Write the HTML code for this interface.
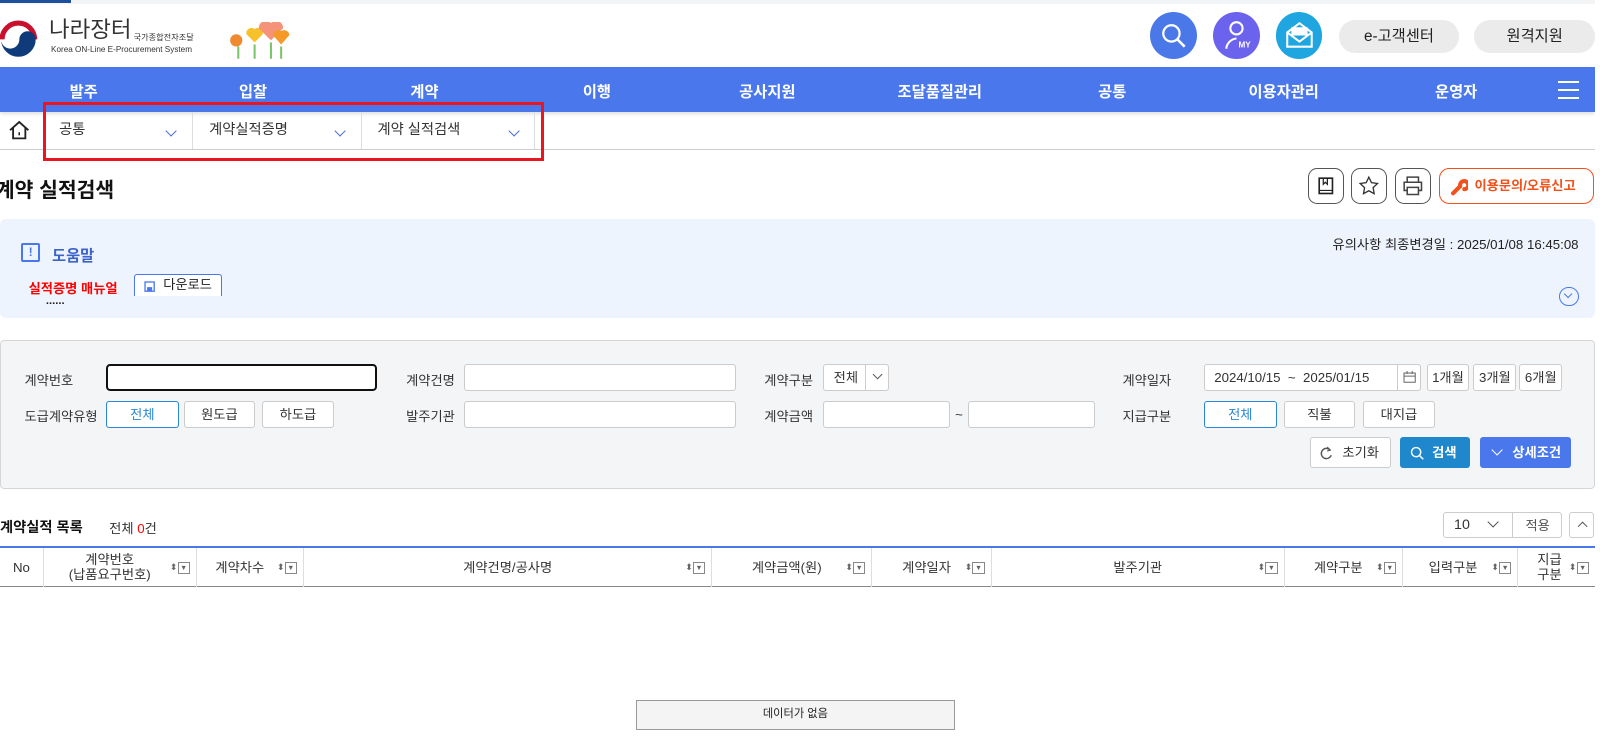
<!DOCTYPE html>
<html><head><meta charset="utf-8">
<style>
*{box-sizing:border-box;margin:0;padding:0}
body{width:1600px;height:739px;overflow:hidden;background:#fff;font-family:"Liberation Sans","Noto Sans CJK KR",sans-serif;color:#222}
#w{position:relative;width:1563px;height:724px;zoom:1.0204;overflow:hidden}
.a{position:absolute}
.nav span{position:absolute;top:12px;color:#fff;font-size:15px;font-weight:bold;transform:translateX(-50%)}
.circ{position:absolute;top:12px;width:46px;height:46px;border-radius:50%}
.pill{position:absolute;top:20px;height:32px;border-radius:16px;background:#ebebeb;font-size:15px;text-align:center;line-height:34px;color:#222}
.bc{position:absolute;top:110px;height:36px;font-size:14px;line-height:36px;color:#333;border-right:1px solid #ddd}
.chev{position:absolute;top:14px;width:8px;height:8px;border-right:1.5px solid #4a6fd8;border-bottom:1.5px solid #4a6fd8;transform:rotate(45deg)}
.ib{position:absolute;top:165px;width:35px;height:35px;border:1px solid #555;border-radius:9px}
.lbl{position:absolute;font-size:13px;color:#333}
.inp{position:absolute;height:26px;border:1px solid #ccc;border-radius:3px;background:#fff}
.btn{position:absolute;height:26px;border:1px solid #ccc;border-radius:3px;background:#fff;font-size:13px;text-align:center;line-height:25px;color:#333}
.sel{border-color:#2b88d8;color:#2b88d8}
.th{position:absolute;top:537px;height:38px;border-right:1px solid #ddd;font-size:13px;text-align:center;color:#333;display:flex;align-items:center;justify-content:center;line-height:15px}
.srt{position:absolute;right:6px;top:12px;font-size:9px;color:#666}
.srt b{display:inline-block;width:12px;height:12px;border:1px solid #888;vertical-align:middle;font-size:7px;line-height:10px;font-weight:normal}
</style></head><body><div id="w">
<div class="a" style="left:0;top:0;width:1563px;height:4px;background:#f3f4f6"></div>
<div class="a" style="left:0;top:0;width:70px;height:3px;background:#1d4f9c"></div>
<!-- logo -->
<svg class="a" style="left:0;top:18px" width="38" height="42" viewBox="0 0 38 42"><circle cx="18" cy="21" r="17" fill="#fff"/><path d="M2 21A16 16 0 0 1 34 21" fill="none" stroke="#c8102e" stroke-width="5"/><path d="M1 21a17 17 0 0 0 34 0 8 8 0 0 0-16 0 9 9 0 0 1-18 0z" fill="#0f3b7a"/></svg>
<div class="a" style="left:48px;top:17px;font-size:22px;color:#333;line-height:26px">나라장터</div>
<div class="a" style="left:131px;top:31px;font-size:8px;color:#333">국가종합전자조달</div>
<div class="a" style="left:50px;top:44px;font-size:8px;color:#333">Korea ON-Line E-Procurement System</div>
<svg class="a" style="left:220px;top:22px" width="70" height="38"><circle cx="12" cy="18" r="6" fill="#f08a30"/><path d="M30 20l-8-8a5 5 0 0 1 8-5a5 5 0 0 1 8 5z" fill="#f6c12a"/><path d="M46 18l-12-12a7 7 0 0 1 12-5a7 7 0 0 1 12 5z" fill="#f4937a"/><path d="M56 22l-8-9a5 5 0 0 1 8-4a5 5 0 0 1 8 4z" fill="#f59a28"/><path d="M14 24v12M30 22v14M46 20v16M56 24v12" stroke="#7bc26a" stroke-width="2"/></svg>
<div class="circ" style="left:1127px;background:#4a78e8"><svg width="46" height="46"><circle cx="21" cy="21" r="8" fill="none" stroke="#fff" stroke-width="2.2"/><path d="M27 27l7 7" stroke="#fff" stroke-width="2.5"/></svg></div>
<div class="circ" style="left:1189px;background:#6b63ee"><svg width="46" height="46"><circle cx="23" cy="16" r="6" fill="none" stroke="#fff" stroke-width="2"/><path d="M13 36a11 11 0 0 1 10-10" fill="none" stroke="#fff" stroke-width="2"/><text x="25" y="35" font-size="8" fill="#fff" font-family="Liberation Sans" font-weight="bold">MY</text></svg></div>
<div class="circ" style="left:1250px;background:#1fa5e0"><svg width="46" height="46"><path d="M11 20l12-9 12 9v14H11z M11 20l12 9 12-9" fill="none" stroke="#fff" stroke-width="2"/><path d="M15 15h16v8H15z" fill="#fff"/></svg></div>
<div class="pill" style="left:1312px;width:118px">e-고객센터</div>
<div class="pill" style="left:1445px;width:118px">원격지원</div>
<!-- nav -->
<div class="a nav" style="left:0;top:66px;width:1563px;height:44px;background:#4a78ec;box-shadow:0 2px 4px rgba(0,0,0,.15)">
<span style="left:82px">발주</span><span style="left:248px">입찰</span><span style="left:416px">계약</span><span style="left:585px">이행</span><span style="left:752px">공사지원</span><span style="left:921px">조달품질관리</span><span style="left:1090px">공통</span><span style="left:1258px">이용자관리</span><span style="left:1427px">운영자</span>
<div class="a" style="left:1527px;top:13px;width:20px;height:18px;border-top:2px solid #fff;border-bottom:2px solid #fff"><div style="margin-top:6px;height:2px;background:#fff"></div></div>
</div>
<!-- breadcrumb -->
<div class="a" style="left:0;top:146px;width:1563px;height:1px;background:#ccc"></div>
<svg class="a" style="left:8px;top:118px" width="22" height="20"><path d="M2 10L11 2l9 8M5 8v10h12V8" fill="none" stroke="#222" stroke-width="1.8"/><path d="M11 12v3" stroke="#222" stroke-width="1.5"/></svg>
<div class="bc" style="left:42px;width:147px;padding-left:16px">공통<i class="chev" style="left:122px"></i></div>
<div class="bc" style="left:189px;width:166px;padding-left:16px">계약실적증명<i class="chev" style="left:140px"></i></div>
<div class="bc" style="left:355px;width:169px;padding-left:15px">계약 실적검색<i class="chev" style="left:145px"></i></div>
<div class="a" style="left:42px;top:100px;width:491px;height:58px;border:3px solid #e8171f"></div>
<!-- title -->
<div class="a" style="left:-4px;top:170px;font-size:20px;font-weight:bold;color:#111">계약 실적검색</div>
<div class="ib" style="left:1282px"><svg width="33" height="33"><rect x="10" y="9" width="13" height="15" fill="none" stroke="#222" stroke-width="1.6"/><path d="M10 21h13M14 9v6l2-2 2 2V9" fill="none" stroke="#222" stroke-width="1.2"/></svg></div>
<div class="ib" style="left:1324px"><svg width="33" height="33"><path d="M16.5 8l2.6 5.4 5.9.8-4.3 4.1 1 5.8-5.2-2.8-5.2 2.8 1-5.8-4.3-4.1 5.9-.8z" fill="none" stroke="#333" stroke-width="1.3"/></svg></div>
<div class="ib" style="left:1367px"><svg width="33" height="33"><path d="M11 13V8h11v5M11 21H8v-8h17v8h-3M11 18h11v7H11z" fill="none" stroke="#444" stroke-width="1.5"/></svg></div>
<div class="a" style="left:1410px;top:165px;width:152px;height:35px;border:1px solid #f2511b;border-radius:10px;color:#f2511b;font-size:13px;font-weight:bold;line-height:33px;padding-left:34px"><svg class="a" style="left:10px;top:8px" width="18" height="18"><path d="M3 15l7-7M10 8a4 4 0 1 1 4 3" stroke="#f2511b" stroke-width="4" fill="none" stroke-linecap="round"/></svg>이용문의/오류신고</div>
<!-- help -->
<div class="a" style="left:0;top:215px;width:1563px;height:97px;background:#eef4fd;border-radius:6px"></div>
<div class="a" style="left:21px;top:238px;width:18px;height:19px;border:2px solid #4a78ec;border-radius:2px;color:#4a78ec;font-size:12px;font-weight:bold;text-align:center;line-height:15px">!</div>
<div class="a" style="left:51px;top:239px;font-size:15px;color:#3c64c8;font-weight:bold">도움말</div>
<div class="a" style="right:16px;top:229px;font-size:13px;color:#222">유의사항 최종변경일 : 2025/01/08 16:45:08</div>
<div class="a" style="left:28px;top:272px;font-size:13px;color:#f00;font-weight:bold">실적증명 매뉴얼</div>
<div class="a" style="left:131px;top:269px;width:87px;height:21px;border:1px solid #4a78ec;border-bottom:none;border-radius:3px 3px 0 0;background:#fff;font-size:13px;line-height:20px;padding-left:28px">다운로드<svg class="a" style="left:9px;top:5px" width="11" height="11"><rect x="1" y="1" width="9" height="9" fill="none" stroke="#4a78ec" stroke-width="1.3"/><rect x="3" y="6" width="5" height="4" fill="#4a78ec"/></svg></div>
<div class="a" style="left:45px;top:289px;font-size:11px;color:#222;font-weight:bold">......</div>
<div class="a" style="left:1528px;top:281px;width:19px;height:19px;border:1.5px solid #4a78ec;border-radius:50%"><i class="a" style="left:5px;top:3px;width:6px;height:6px;border-right:1.5px solid #4a78ec;border-bottom:1.5px solid #4a78ec;transform:rotate(45deg)"></i></div>
<!-- search -->
<div class="a" style="left:0;top:333px;width:1563px;height:146px;background:#f4f5f7;border:1px solid #d5d5d5;border-radius:4px"></div>
<div class="lbl" style="left:24px;top:363px">계약번호</div>
<div class="inp" style="left:104px;top:357px;width:265px;border:2px solid #111;border-radius:4px"></div>
<div class="lbl" style="left:24px;top:398px">도급계약유형</div>
<div class="btn sel" style="left:104px;top:393px;width:71px">전체</div>
<div class="btn" style="left:180px;top:393px;width:70px">원도급</div>
<div class="btn" style="left:257px;top:393px;width:70px">하도급</div>
<div class="lbl" style="left:398px;top:363px">계약건명</div>
<div class="inp" style="left:455px;top:357px;width:266px"></div>
<div class="lbl" style="left:398px;top:398px">발주기관</div>
<div class="inp" style="left:455px;top:393px;width:266px"></div>
<div class="lbl" style="left:749px;top:363px">계약구분</div>
<div class="btn" style="left:807px;top:357px;width:64px;text-align:left;padding-left:9px">전체<span style="position:absolute;left:40px;top:0;width:1px;height:24px;background:#ccc"></span><i class="a" style="left:49px;top:6px;width:7px;height:7px;border-right:1px solid #555;border-bottom:1px solid #555;transform:rotate(45deg)"></i></div>
<div class="lbl" style="left:749px;top:398px">계약금액</div>
<div class="inp" style="left:807px;top:393px;width:124px"></div>
<div class="lbl" style="left:936px;top:399px">~</div>
<div class="inp" style="left:949px;top:393px;width:124px"></div>
<div class="lbl" style="left:1100px;top:363px">계약일자</div>
<div class="btn" style="left:1180px;top:357px;width:213px;text-align:left;padding-left:9px">2024/10/15 &nbsp;~ &nbsp;2025/01/15<span style="position:absolute;left:188px;top:0;width:1px;height:24px;background:#ccc"></span><svg class="a" style="left:194px;top:6px" width="13" height="12"><rect x="1" y="2" width="11" height="9" fill="none" stroke="#666"/><path d="M1 5h11M4 0v3M9 0v3" stroke="#666"/></svg></div>
<div class="btn" style="left:1398px;top:357px;width:42px;font-size:13px">1개월</div>
<div class="btn" style="left:1444px;top:357px;width:42px">3개월</div>
<div class="btn" style="left:1489px;top:357px;width:42px">6개월</div>
<div class="lbl" style="left:1100px;top:398px">지급구분</div>
<div class="btn sel" style="left:1180px;top:393px;width:71px">전체</div>
<div class="btn" style="left:1258px;top:393px;width:70px">직불</div>
<div class="btn" style="left:1336px;top:393px;width:70px">대지급</div>
<div class="btn" style="left:1284px;top:428px;width:79px;height:31px;line-height:29px;padding-left:20px">초기화<svg class="a" style="left:8px;top:8px" width="14" height="14"><path d="M11 4a5 5 0 1 0 1 5" fill="none" stroke="#555" stroke-width="1.4"/><path d="M8 1l3 3-3 1" fill="none" stroke="#555" stroke-width="1.2"/></svg></div>
<div class="btn" style="left:1372px;top:428px;width:69px;height:31px;line-height:31px;background:#1f88cc;border:none;color:#fff;font-weight:bold;padding-left:18px">검색<svg class="a" style="left:10px;top:9px" width="14" height="14"><circle cx="6" cy="6" r="4.5" fill="none" stroke="#fff" stroke-width="1.4"/><path d="M9.5 9.5l3.5 3.5" stroke="#fff" stroke-width="1.4"/></svg></div>
<div class="btn" style="left:1450px;top:428px;width:90px;height:31px;line-height:31px;background:#4a78ec;border:none;color:#fff;font-weight:bold;padding-left:22px">상세조건<i class="a" style="left:13px;top:9px;width:8px;height:8px;border-right:1.5px solid #fff;border-bottom:1.5px solid #fff;transform:rotate(45deg)"></i></div>
<!-- list -->
<div class="a" style="left:0;top:506px;font-size:14px;font-weight:bold;color:#111">계약실적 목록</div>
<div class="a" style="left:107px;top:508px;font-size:13px;color:#333">전체 <span style="color:#f00">0</span>건</div>
<div class="btn" style="left:1414px;top:502px;width:117px;height:25px;text-align:left;padding-left:10px;font-size:14px">10<span style="position:absolute;left:67px;top:0;width:1px;height:23px;background:#ccc"></span><i class="a" style="left:44px;top:5px;width:8px;height:8px;border-right:1px solid #555;border-bottom:1px solid #555;transform:rotate(45deg)"></i><span style="position:absolute;left:80px;top:0;font-size:13px;color:#555">적용</span></div>
<div class="btn" style="left:1538px;top:502px;width:24px;height:25px"><i class="a" style="left:8px;top:10px;width:7px;height:7px;border-left:1px solid #555;border-top:1px solid #555;transform:rotate(45deg)"></i></div>
<div class="a" style="left:0;top:535px;width:1563px;height:2px;background:#4a78ec"></div>
<div class="a" style="left:0;top:574px;width:1563px;height:1px;background:#888"></div>
<div class="th" style="left:0;width:43px">No</div>
<div class="th" style="left:43px;width:150px;padding-right:20px">계약번호<br>(납품요구번호)<span class="srt">⬍<b>▼</b></span></div>
<div class="th" style="left:193px;width:105px;padding-right:20px">계약차수<span class="srt">⬍<b>▼</b></span></div>
<div class="th" style="left:298px;width:400px">계약건명/공사명<span class="srt">⬍<b>▼</b></span></div>
<div class="th" style="left:698px;width:157px;padding-right:10px">계약금액(원)<span class="srt">⬍<b>▼</b></span></div>
<div class="th" style="left:855px;width:117px;padding-right:10px">계약일자<span class="srt">⬍<b>▼</b></span></div>
<div class="th" style="left:972px;width:287px">발주기관<span class="srt">⬍<b>▼</b></span></div>
<div class="th" style="left:1259px;width:116px;padding-right:10px">계약구분<span class="srt">⬍<b>▼</b></span></div>
<div class="th" style="left:1375px;width:113px;padding-right:14px">입력구분<span class="srt">⬍<b>▼</b></span></div>
<div class="th" style="left:1488px;width:75px;padding-right:14px;border:none">지급<br>구분<span class="srt">⬍<b>▼</b></span></div>
<div class="a" style="left:623px;top:686px;width:313px;height:29px;border:1px solid #999;background:#f4f4f4;font-size:11px;text-align:center;line-height:27px;color:#222">데이터가 없음</div>
</div></body></html>
